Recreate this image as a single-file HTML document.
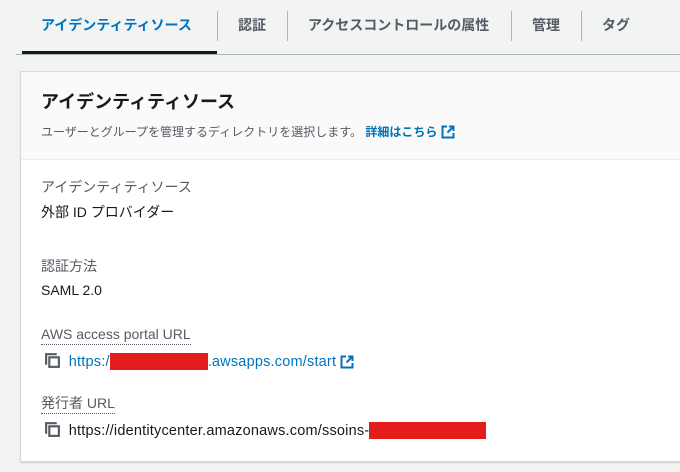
<!DOCTYPE html>
<html><head><meta charset="utf-8"><style>
*{margin:0;padding:0;box-sizing:border-box}
body{width:680px;height:472px;overflow:hidden;background:#f2f3f3;font-family:"Liberation Sans","Noto Sans CJK JP",sans-serif;color:#16191f;position:relative}
.tabs{position:absolute;top:0;left:16px;right:0;height:55px;border-bottom:1px solid #aab7b8}
.tab{position:absolute;top:14px;font-size:14px;font-weight:bold;color:#545b64;white-space:nowrap;line-height:22px}
.div{position:absolute;top:11px;width:1px;height:30px;background:#aab7b8}
.act{position:absolute;left:22px;top:51px;width:195px;height:3px;background:#16191f}
.card{position:absolute;left:20px;top:71px;width:700px;height:391px;background:#fff;border:1px solid #d5dbdb;box-shadow:0 1px 1px rgba(0,27,43,.15)}
.hd{height:88px;background:#fafafa;border-bottom:1px solid #eaeded;padding:18px 0 0 20px}
.hd h2{font-size:18px;font-weight:bold;line-height:24px}
.hd p{font-size:12px;color:#545b64;margin-top:9px;line-height:18px}
.hd a{color:#0073bb;font-weight:bold;text-decoration:none}
.lab{position:absolute;left:20px;font-size:14px;color:#545b64;line-height:20px}
.val{position:absolute;left:20px;font-size:14px;line-height:20px;white-space:nowrap}
.url{letter-spacing:.2px;font-size:14.5px}
.dot{border-bottom:1px dotted #545b64;padding-bottom:2px}
.red{display:inline-block;background:#e51c1c;height:17px;vertical-align:-4px}
svg{vertical-align:-3px}
</style></head><body>
<div class="tabs"></div>
<div class="tab" style="left:41px;color:#0073bb">アイデンティティソース</div>
<div class="div" style="left:217px"></div>
<div class="tab" style="left:238px">認証</div>
<div class="div" style="left:287px"></div>
<div class="tab" style="left:308px">アクセスコントロールの属性</div>
<div class="div" style="left:511px"></div>
<div class="tab" style="left:532px">管理</div>
<div class="div" style="left:581px"></div>
<div class="tab" style="left:602px">タグ</div>
<div class="act"></div>
<div class="card">
 <div class="hd"><h2>アイデンティティソース</h2>
 <p>ユーザーとグループを管理するディレクトリを選択します。 <a>詳細はこちら <svg width="14" height="14" viewBox="0 0 14 14"><path d="M6 1.5H1.5v11h11V8" fill="none" stroke="#0073bb" stroke-width="2"/><path d="M8 1.5h4.5V6M12.5 1.5L6.5 7.5" fill="none" stroke="#0073bb" stroke-width="2"/></svg></a></p></div>
 <div class="lab" style="top:105px">アイデンティティソース</div>
 <div class="val" style="top:130px">外部 ID プロバイダー</div>
 <div class="lab" style="top:184px">認証方法</div>
 <div class="val" style="top:208px">SAML 2.0</div>
 <div class="lab" style="top:252px"><span class="dot">AWS access portal URL</span></div>
 <div class="val" style="top:279px;left:23px"><svg width="17" height="17" viewBox="0 0 16 16"><path d="M2 12V2h10" fill="none" stroke="#545b64" stroke-width="2"/><rect x="5" y="5" width="9" height="9" fill="none" stroke="#545b64" stroke-width="2"/></svg>&nbsp; <span class="url" style="color:#0073bb">https:/<span class="red" style="width:98px"></span>.awsapps.com/start <svg width="14" height="14" viewBox="0 0 14 14"><path d="M6 1.5H1.5v11h11V8" fill="none" stroke="#0073bb" stroke-width="2"/><path d="M8 1.5h4.5V6M12.5 1.5L6.5 7.5" fill="none" stroke="#0073bb" stroke-width="2"/></svg></span></div>
 <div class="lab" style="top:321px"><span class="dot">発行者 URL</span></div>
 <div class="val" style="top:348px;left:23px"><svg width="17" height="17" viewBox="0 0 16 16"><path d="M2 12V2h10" fill="none" stroke="#545b64" stroke-width="2"/><rect x="5" y="5" width="9" height="9" fill="none" stroke="#545b64" stroke-width="2"/></svg>&nbsp; <span class="url">https://identitycenter.amazonaws.com/ssoins-<span class="red" style="width:117px"></span></span></div>
</div>
</body></html>
